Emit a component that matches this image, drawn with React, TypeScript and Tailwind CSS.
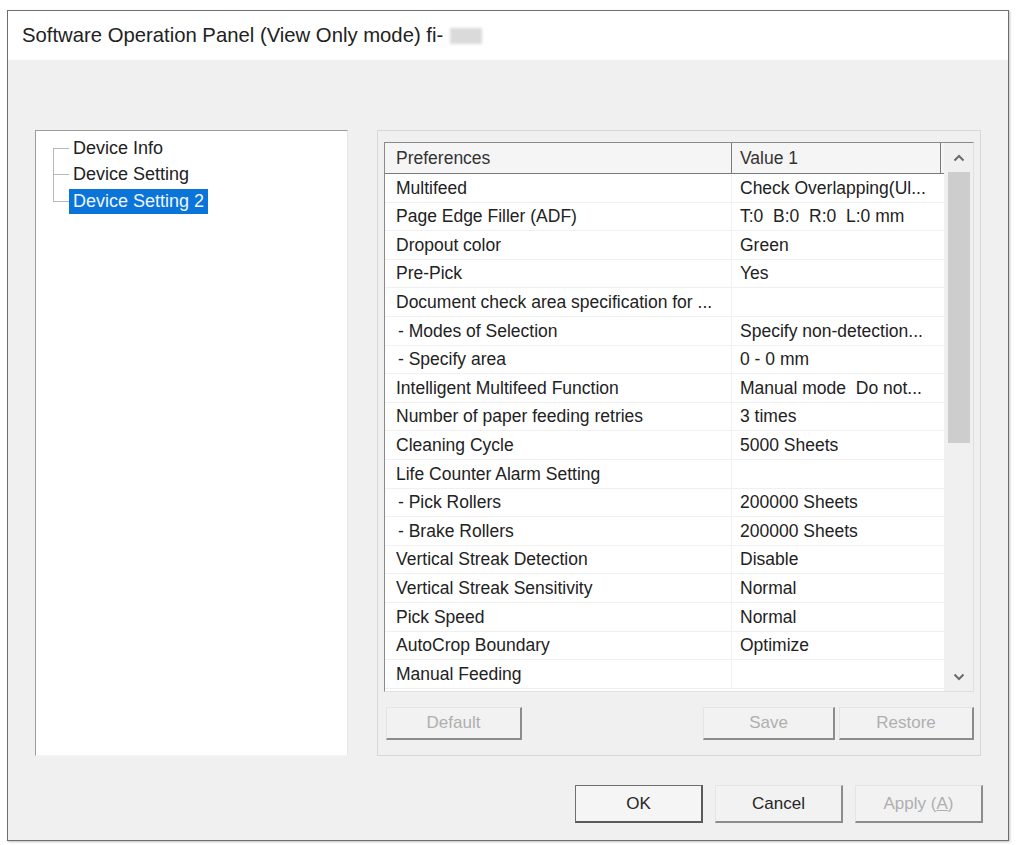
import React from 'react';

interface Row {
    name: string;
    value: string;
    sub?: boolean;
}

const rows: Row[] = [
    { name: 'Multifeed', value: 'Check Overlapping(Ul...' },
    { name: 'Page Edge Filler (ADF)', value: 'T:0  B:0  R:0  L:0 mm' },
    { name: 'Dropout color', value: 'Green' },
    { name: 'Pre-Pick', value: 'Yes' },
    { name: 'Document check area specification for ...', value: '' },
    { name: '- Modes of Selection', value: 'Specify non-detection...', sub: true },
    { name: '- Specify area', value: '0 - 0 mm', sub: true },
    { name: 'Intelligent Multifeed Function', value: 'Manual mode  Do not...' },
    { name: 'Number of paper feeding retries', value: '3 times' },
    { name: 'Cleaning Cycle', value: '5000 Sheets' },
    { name: 'Life Counter Alarm Setting', value: '' },
    { name: '- Pick Rollers', value: '200000 Sheets', sub: true },
    { name: '- Brake Rollers', value: '200000 Sheets', sub: true },
    { name: 'Vertical Streak Detection', value: 'Disable' },
    { name: 'Vertical Streak Sensitivity', value: 'Normal' },
    { name: 'Pick Speed', value: 'Normal' },
    { name: 'AutoCrop Boundary', value: 'Optimize' },
    { name: 'Manual Feeding', value: '' },
];

const treeItems = ['Device Info', 'Device Setting', 'Device Setting 2'];

const Chevron: React.FC<{ up?: boolean }> = ({ up }) => (
    <svg width="12" height="8" viewBox="0 0 12 8">
        <polyline
            points={up ? '1.5,6.5 6,2 10.5,6.5' : '1.5,1.5 6,6 10.5,1.5'}
            fill="none"
            stroke="#6a6a6a"
            strokeWidth="2"
        />
    </svg>
);

const WinButton: React.FC<{ label: React.ReactNode; disabled?: boolean; isDefault?: boolean; className?: string }> = ({
    label,
    disabled,
    isDefault,
    className,
}) => (
    <button
        className={`flex items-center justify-center bg-[#f2f2f2] text-[17px] ${
            isDefault
                ? 'border border-[#6e6e6e] border-b-2 border-r-2 border-b-[#5a5a5a] border-r-[#5a5a5a] bg-[#f5f5f5]'
                : 'border border-[#e4e4e4] border-b-2 border-r-2 border-b-[#8c8c8c] border-r-[#8c8c8c]'
        } ${disabled ? 'text-[#afafaf]' : 'text-[#262626]'} ${className ?? ''}`}
    >
        {label}
    </button>
);

const App: React.FC = () => {
    return (
        <div className="w-[1017px] h-[845px] bg-white pl-[7px] pt-[10px] font-['Liberation_Sans',Arial,sans-serif]">
            <div className="w-[1002px] h-[831px] border border-[#6f6f6f] flex flex-col bg-[#f0f0f0] shadow-[1px_1px_2px_rgba(0,0,0,0.25)]">
                {/* title bar */}
                <div className="h-[49px] bg-white flex items-center pl-[14px] shrink-0">
                    <span className="text-[20.3px] text-[#222]">Software Operation Panel (View Only mode) fi-</span>
                    <span className="ml-[7px] w-[32px] h-[16px] bg-[#dadada] blur-[1.5px]" />
                </div>

                <div className="flex flex-col px-[27px] pt-[70px]">
                    <div className="flex gap-[29px] h-[626px]">
                        {/* tree */}
                        <div className="w-[313px] bg-white border border-t-[#9c9c9c] border-l-[#9c9c9c] border-r-[#e6e6e6] border-b-[#f6f6f6] pt-[4px] pl-[17px]">
                            {treeItems.map((item, i) => (
                                <div key={item} className="flex h-[26.5px] items-stretch">
                                    <div className="w-[16px] flex flex-col">
                                        <div className={`flex-1 ${i > 0 ? 'border-l border-[#b8b8b8]' : ''}`} />
                                        <div
                                            className={`flex-1 border-t border-[#b8b8b8] ${
                                                i < treeItems.length - 1 ? 'border-l' : ''
                                            }`}
                                        />
                                    </div>
                                    <div className="flex items-center">
                                        <span
                                            className={`h-[25px] flex items-center px-[4px] text-[18px] ${
                                                i === 2 ? 'bg-[#0a74d8] text-[#eef6ff]' : 'text-[#222]'
                                            }`}
                                        >
                                            {item}
                                        </span>
                                    </div>
                                </div>
                            ))}
                        </div>

                        {/* group */}
                        <div className="w-[604px] border border-[#d8d8d8] flex flex-col pt-[11px] px-[6px] pb-[15px]">
                            <div className="h-[550px] bg-white border border-t-[#8a8a8a] border-l-[#8a8a8a] border-r-[#e0e0e0] border-b-[#e0e0e0] flex text-[17.5px] text-[#222]">
                                <div className="flex-1 flex flex-col overflow-hidden">
                                    <div className="h-[31px] flex bg-[#f5f5f5] border-b border-[#7a7a7a] text-[#333] shrink-0">
                                        <div className="w-[347px] border-r border-[#7a7a7a] pl-[11px] flex items-center">
                                            Preferences
                                        </div>
                                        <div className="w-[209px] border-r border-[#7a7a7a] pl-[8px] flex items-center">
                                            Value 1
                                        </div>
                                    </div>
                                    {rows.map((row) => (
                                        <div key={row.name} className="h-[28.6px] flex border-b border-[#f0f0f0] shrink-0">
                                            <div
                                                className={`w-[347px] border-r border-[#f0f0f0] flex items-center whitespace-nowrap overflow-hidden ${
                                                    row.sub ? 'pl-[13px]' : 'pl-[11px]'
                                                }`}
                                            >
                                                {row.name}
                                            </div>
                                            <div className="w-[209px] pl-[8px] flex items-center whitespace-pre overflow-hidden">
                                                {row.value}
                                            </div>
                                        </div>
                                    ))}
                                </div>
                                {/* scrollbar */}
                                <div className="w-[29px] bg-[#f0f0f0] flex flex-col">
                                    <div className="h-[29px] flex items-center justify-center">
                                        <Chevron up />
                                    </div>
                                    <div className="flex-1 pl-[4px] pr-[3px]">
                                        <div className="h-[271px] bg-[#cdcdcd]" />
                                    </div>
                                    <div className="h-[29px] flex items-center justify-center">
                                        <Chevron />
                                    </div>
                                </div>
                            </div>

                            <div className="flex mt-[15px] h-[33px] pl-[2px]">
                                <WinButton label="Default" disabled className="w-[136px]" />
                                <div className="flex-1" />
                                <WinButton label="Save" disabled className="w-[132px]" />
                                <WinButton label="Restore" disabled className="w-[135px] ml-[4px]" />
                            </div>
                        </div>
                    </div>

                    <div className="flex justify-end gap-[12px] mt-[29px] h-[38px]">
                        <WinButton label="OK" isDefault className="w-[128px]" />
                        <WinButton label="Cancel" className="w-[128px]" />
                        <WinButton
                            label={
                                <span>
                                    Apply (<span className="underline">A</span>)
                                </span>
                            }
                            disabled
                            className="w-[128px] mr-[-2px]"
                        />
                    </div>
                </div>
            </div>
        </div>
    );
};

export default App;
